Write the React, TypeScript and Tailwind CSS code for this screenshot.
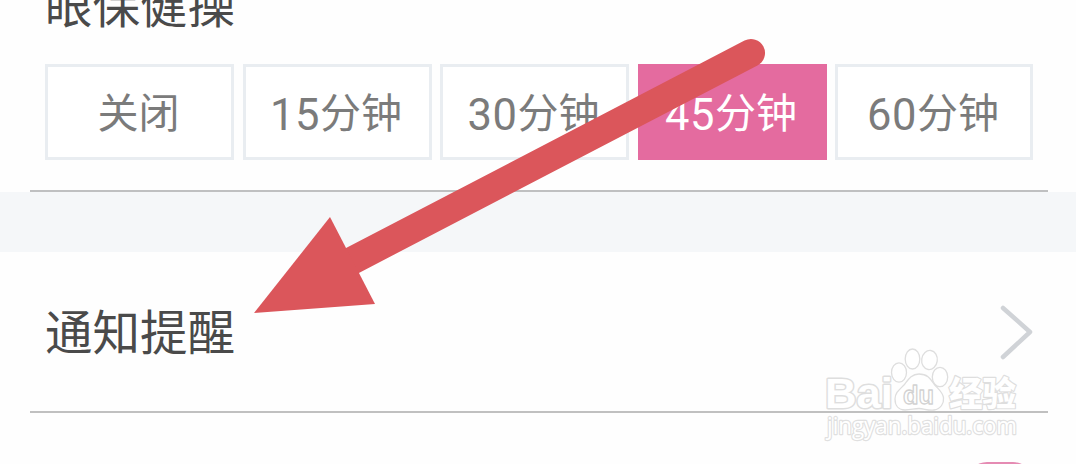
import { clsx } from 'clsx';
import { useState } from 'react';

const OPTIONS = [
  { value: 0, label: '关闭' },
  { value: 15, label: '15分钟' },
  { value: 30, label: '30分钟' },
  { value: 45, label: '45分钟' },
  { value: 60, label: '60分钟' },
];

function Arrow() {
  return (
    <svg className="absolute inset-0 pointer-events-none" width="1076" height="464" viewBox="0 0 1076 464">
      <path d="M751 53L340 267" stroke="#db565b" strokeWidth="28" strokeLinecap="round" />
      <path d="M254 313L330 217L375 304Z" fill="#db565b" />
    </svg>
  );
}

function Watermark() {
  return (
    <svg
      className="absolute left-[816px] top-[340px] pointer-events-none"
      width="212"
      height="110"
      viewBox="816 340 212 110"
      fill="#fff"
      stroke="#dedede"
      strokeWidth="1.3"
      strokeLinejoin="round"
    >
      <text x="825" y="408" fontSize="43" textLength="68" lengthAdjust="spacingAndGlyphs" paintOrder="stroke" strokeWidth="3" className="font-['Liberation_Sans',sans-serif] font-bold">Bai</text>
      {/* paw */}
      <ellipse cx="899" cy="372.5" rx="7.5" ry="9.7" />
      <ellipse cx="912.5" cy="359" rx="7.3" ry="10" />
      <ellipse cx="929.5" cy="360" rx="7.8" ry="9.6" transform="rotate(8 929.5 360)" />
      <ellipse cx="940" cy="377" rx="7.7" ry="9.7" />
      <path d="M919 374C911 374 908 380 904 385C899 390 895 393 895 399C895 406 899 410 905 410C911 410 914 408.500 919 408.500C924 408.500 928 411 934 410C941 409 944 403 943.500 398C943 392 938 389 934 384C930 378 927 374 919 374Z" />
      <text x="903" y="404" fontSize="26" textLength="31" lengthAdjust="spacingAndGlyphs" stroke="#d2d2d2" className="font-['Liberation_Sans',sans-serif] font-bold">du</text>
      <text x="949" y="406" fontSize="34" textLength="67" lengthAdjust="spacingAndGlyphs" paintOrder="stroke" strokeWidth="2.4" className="font-['Noto_Sans_CJK_SC',sans-serif] font-black">经验</text>
      <text x="827" y="434" fontSize="23" textLength="190" lengthAdjust="spacingAndGlyphs" paintOrder="stroke" strokeWidth="2.4" stroke="#e0e0e0" className="font-['Open_Sans',sans-serif] font-medium">jingyan.baidu.com</text>
    </svg>
  );
}

export default function App() {
  const [minutes, setMinutes] = useState(45);

  return (
    <div className="relative w-[1076px] h-[464px] overflow-hidden bg-[#fefefe] flex flex-col font-[Roboto,'Noto_Sans_CJK_SC',sans-serif]">
      <section className="h-[190px] shrink-0 pl-[45px] pr-[43px] flex flex-col">
        <div className="h-16 shrink-0 flex items-end">
          <h2 className="text-[47.5px] leading-[60px] mb-[27px] text-[#4a4a4a]">眼保健操</h2>
        </div>
        <div className="grid grid-cols-[189px_189px_189px_189px_198px] gap-x-[8.5px]">
          {OPTIONS.map((option) => (
            <button
              key={option.value}
              onClick={() => setMinutes(option.value)}
              className={clsx(
                'h-24 pt-[5px] pr-[2px] border-3 flex items-center justify-center text-[41px] leading-none',
                minutes === option.value
                  ? 'bg-[#e46b9f] border-[#e46b9f] text-white'
                  : 'bg-white border-[#e9edf1] text-[#7b7b7b]'
              )}
            >
              {option.value > 0 && <span className="text-[43.5px] tracking-[0.5px] pt-0.5">{option.value}</span>}
              <span>{option.label.replace(/\d/g, '')}</span>
            </button>
          ))}
        </div>
      </section>
      <div className="h-0.5 shrink-0 ml-[30px] mr-[28px] bg-[#bfc0c1]" />
      <div className="h-[60px] shrink-0 bg-[#f5f7f9]" />

      <section className="h-[159px] shrink-0 pl-[45px] pr-[43px] flex items-center justify-between">
        <h2 className="text-[47.5px] leading-[60px] pt-[5px] text-[#4a4a4a]">通知提醒</h2>
        <svg width="34" height="56" viewBox="0 0 34 56" fill="none" className="stroke-[#d0d3d7]">
          <path d="M4 4L31 28L4 53" strokeWidth="4.5" strokeLinecap="round" strokeLinejoin="round" />
        </svg>
      </section>

      <Watermark />
      <div className="relative h-0.5 shrink-0 ml-[30px] mr-[28px] bg-[#c0c0c0]" />

      {/* top edge of the next row's switch */}
      <div className="h-[51px] shrink-0 pr-[43px] pt-[49px] flex justify-end">
        <div className="w-[66px] h-10 shrink-0 rounded-full bg-[#e58bb3]" />
      </div>

      <Arrow />
    </div>
  );
}
